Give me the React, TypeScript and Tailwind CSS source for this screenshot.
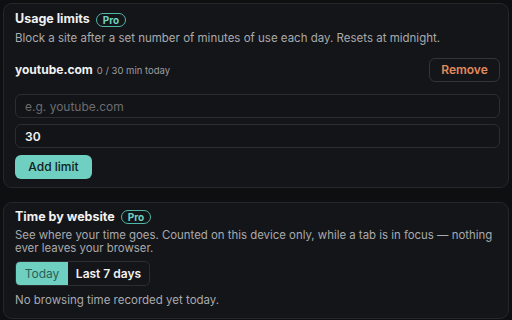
import React from 'react';

function ProBadge() {
  return (
    <span className="inline-flex items-center h-[14px] px-[6px] rounded-[7px] border border-[#4fb7a5] text-[#6fd3c0] text-[10px] font-bold leading-none">
      Pro
    </span>
  );
}

export default function App() {
  return (
    <div
      className="w-[512px] h-[320px] overflow-hidden bg-[#0e0f11] px-[3px] pt-[3px] flex flex-col gap-[14px] text-[#e6e6e8]"
      style={{ fontFamily: 'Inter, "Noto Sans", sans-serif' }}
    >
      <section className="w-[506px] rounded-[9px] border border-[#26272b] bg-[#141518] pl-[11px] pr-[8px] pt-[7px] pb-[8px] flex flex-col">
        <div className="flex items-center gap-[6px] h-[17px]">
          <h2 className="text-[12.5px] font-bold text-[#f1f1f2]">Usage limits</h2>
          <ProBadge />
        </div>
        <p className="mt-[3px] text-[11.5px] leading-[15px] text-[#a9aaae]">
          Block a site after a set number of minutes of use each day. Resets at midnight.
        </p>
        <div className="mt-[12px] flex items-center justify-between">
          <div className="flex items-baseline gap-[4px]">
            <span className="text-[12px] font-bold text-[#f1f1f2]">youtube.com</span>
            <span className="text-[9.5px] text-[#9c9da2]">0 / 30 min today</span>
          </div>
          <button className="w-[71px] h-[24px] rounded-[6px] border border-[#34353a] text-[12px] font-semibold text-[#e38a5c]">
            Remove
          </button>
        </div>
        <input
          className="mt-[12px] h-[24px] rounded-[6px] border border-[#2c2d32] bg-[#131417] px-[9px] text-[12px] text-[#e6e6e8] placeholder:text-[#6b6c71] outline-none"
          placeholder="e.g. youtube.com"
        />
        <input
          className="mt-[6px] h-[24px] rounded-[6px] border border-[#2c2d32] bg-[#131417] px-[9px] text-[12px] font-semibold text-[#f1f1f2] outline-none"
          defaultValue="30"
        />
        <button className="mt-[7px] self-start w-[77px] h-[24px] rounded-[6px] bg-[#6fcfc0] text-[12px] font-medium text-[#10201d]">
          Add limit
        </button>
      </section>

      <section className="w-[506px] rounded-[9px] border border-[#26272b] bg-[#141518] pl-[11px] pr-[6px] pt-[6px] pb-[9px] flex flex-col">
        <div className="flex items-center gap-[6px] h-[16px]">
          <h2 className="text-[12.5px] font-bold text-[#f1f1f2]">Time by website</h2>
          <ProBadge />
        </div>
        <p className="mt-[4px] text-[11.4px] leading-[13px] text-[#a9aaae]">
          See where your time goes. Counted on this device only, while a tab is in focus — nothing ever leaves your browser.
        </p>
        <div className="mt-[6px] self-start flex h-[25px] rounded-[5px] border border-[#2c2d32] overflow-hidden">
          <button className="w-[52px] bg-[#6fcfc0] text-[12px] text-[#2d5e56]">Today</button>
          <button className="w-[81px] text-[12px] font-semibold text-[#f1f1f2]">Last 7 days</button>
        </div>
        <p className="mt-[6px] text-[11.5px] text-[#a9aaae]">No browsing time recorded yet today.</p>
      </section>
    </div>
  );
}
